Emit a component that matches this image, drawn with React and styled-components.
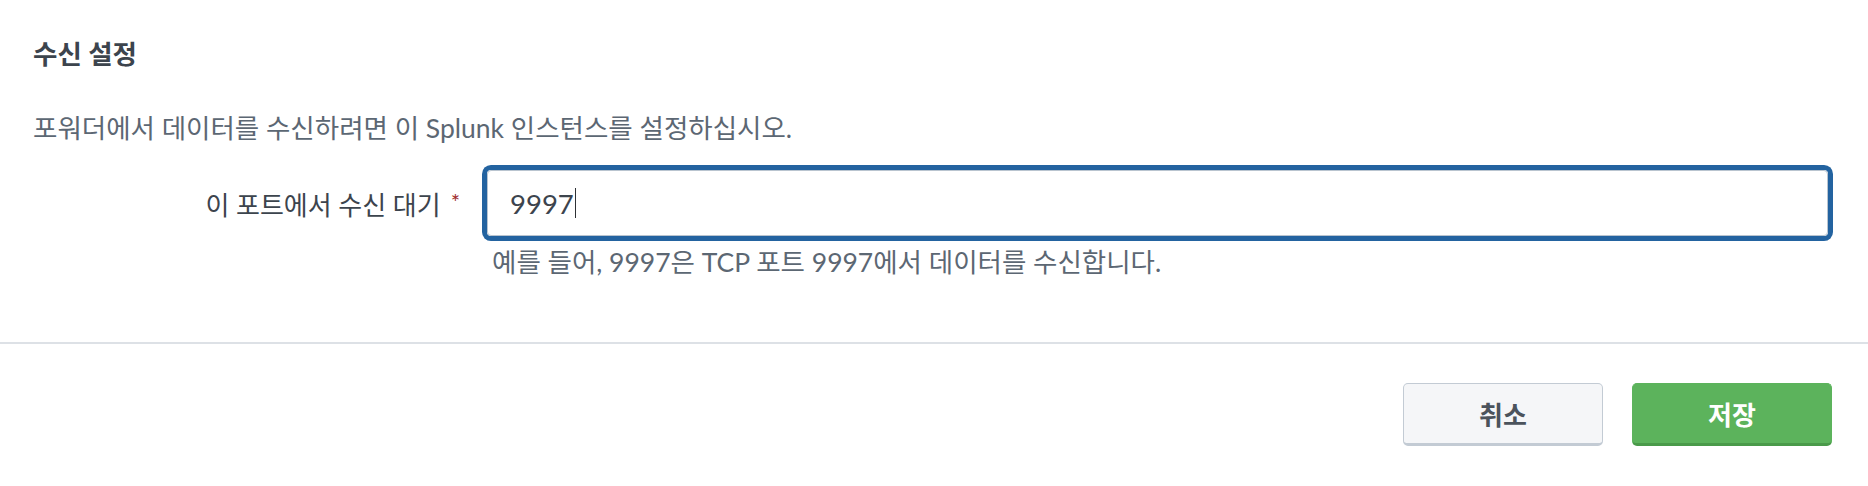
import React from 'react';
import styled, { createGlobalStyle } from 'styled-components';

const GlobalStyle = createGlobalStyle`
  html, body {
    margin: 0;
    padding: 0;
    background: #ffffff;
  }
  body {
    font-family: Lato, "Noto Sans CJK KR", "Noto Sans", sans-serif;
    -webkit-font-smoothing: antialiased;
  }
`;

const Page = styled.div`
  width: 1868px;
  height: 486px;
  display: flex;
  flex-direction: column;
  background: #fff;
`;

const Body = styled.div`
  padding: 38px 40px 66px 33px;
`;

const Title = styled.h2`
  margin: 0;
  font-size: 26.5px;
  line-height: 32px;
  font-weight: 700;
  color: #3c444d;
`;

const Description = styled.p`
  margin: 42px 0 0;
  font-size: 26.5px;
  line-height: 32px;
  color: #5c6773;
`;

const FormRow = styled.div`
  margin-top: 26px;
  display: grid;
  grid-template-columns: 427px 1fr;
  column-gap: 27px;
`;

const Label = styled.label`
  height: 66px;
  display: flex;
  align-items: center;
  justify-content: flex-end;
  gap: 10px;
  font-size: 26px;
  color: #3c444d;
`;

const Required = styled.span`
  color: #9e2c2a;
  font-size: 22px;
  position: relative;
  top: -2px;
`;

const Field = styled.div`
  display: flex;
  flex-direction: column;
`;

const TextBox = styled.div`
  box-sizing: border-box;
  height: 66px;
  display: flex;
  align-items: center;
  padding: 0 22px;
  border: 1px solid #b9c4cf;
  border-radius: 4px;
  box-shadow: 0 0 0 5px #2363a0;
  font-size: 27.5px;
  color: #3c444d;
`;

const Caret = styled.span`
  display: inline-block;
  width: 1.5px;
  height: 30px;
  margin-left: 1px;
  background: #2e3135;
`;

const Help = styled.div`
  margin-top: 12px;
  padding-left: 5px;
  font-size: 26.5px;
  line-height: 28px;
  color: #5c6773;
`;

const Footer = styled.div`
  border-top: 2px solid #dde1e6;
  padding: 39px 36px 37px 0;
  display: flex;
  justify-content: flex-end;
  gap: 29px;
`;

const Button = styled.button`
  box-sizing: border-box;
  width: 200px;
  height: 63px;
  border-radius: 5px;
  font-family: inherit;
  font-size: 26px;
  font-weight: 700;
  cursor: pointer;
  border: 1px solid ${(p) => (p.primary ? '#5cb35c' : '#c3cbd4')};
  border-bottom: 3px solid ${(p) => (p.primary ? '#4a9a4a' : '#c3cbd4')};
  background: ${(p) => (p.primary ? '#5cb35c' : '#f5f6f8')};
  color: ${(p) => (p.primary ? '#ffffff' : '#4b535c')};
`;

export default function App() {
  return (
    <Page>
      <GlobalStyle />
      <Body>
        <Title>수신 설정</Title>
        <Description>포워더에서 데이터를 수신하려면 이 Splunk 인스턴스를 설정하십시오.</Description>
        <FormRow>
          <Label>
            이 포트에서 수신 대기
            <Required>*</Required>
          </Label>
          <Field>
            <TextBox>
              9997
              <Caret />
            </TextBox>
            <Help>예를 들어, 9997은 TCP 포트 9997에서 데이터를 수신합니다.</Help>
          </Field>
        </FormRow>
      </Body>
      <Footer>
        <Button>취소</Button>
        <Button primary>저장</Button>
      </Footer>
    </Page>
  );
}
